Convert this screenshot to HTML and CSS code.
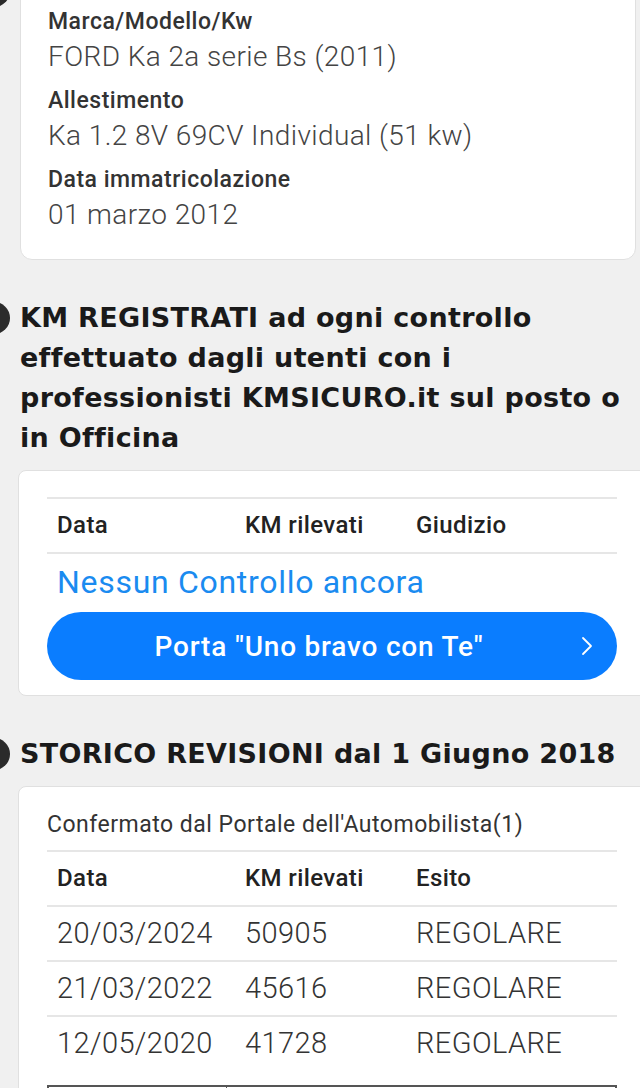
FILE: index.html
```html
<!DOCTYPE html>
<html lang="it">

<head>
    <meta charset="UTF-8">
    <meta name="viewport" content="width=device-width, initial-scale=1.0">
    <link rel="stylesheet" href="styles.css">

    <title>Scheda veicolo</title>
</head>

<body>
    <div class="page">
        <span class="dot-top"></span>

        <div class="card card-info">
            <div class="field">
                <div class="label">Marca/Modello/Kw</div>
                <div class="value">FORD Ka 2a serie Bs (2011)</div>
            </div>
            <div class="field">
                <div class="label">Allestimento</div>
                <div class="value">Ka 1.2 8V 69CV Individual (51 kw)</div>
            </div>
            <div class="field">
                <div class="label">Data immatricolazione</div>
                <div class="value">01 marzo 2012</div>
            </div>
        </div>

        <h2 class="section-title">KM REGISTRATI ad ogni controllo effettuato dagli utenti con i professionisti KMSICURO.it sul posto o in Officina</h2>

        <div class="card card-table card-km">
            <table class="grid">
                <tr>
                    <th>Data</th>
                    <th>KM rilevati</th>
                    <th>Giudizio</th>
                </tr>
            </table>
            <p class="empty">Nessun Controllo ancora</p>
            <a class="cta" href="#">
                <span>Porta "Uno bravo con Te"</span>
                <svg width="12" height="20" viewBox="0 0 12 20"><polyline points="2,2 10,10 2,18" fill="none" stroke="#fff" stroke-width="1.8" stroke-linecap="round" stroke-linejoin="round"/></svg>
            </a>
        </div>

        <h2 class="section-title">STORICO REVISIONI dal 1 Giugno 2018</h2>

        <div class="card card-table card-rev">
            <p class="caption">Confermato dal Portale dell'Automobilista(1)</p>
            <table class="grid">
                <tr>
                    <th>Data</th>
                    <th>KM rilevati</th>
                    <th>Esito</th>
                </tr>
                <tr>
                    <td>20/03/2024</td>
                    <td>50905</td>
                    <td>REGOLARE</td>
                </tr>
                <tr>
                    <td>21/03/2022</td>
                    <td>45616</td>
                    <td>REGOLARE</td>
                </tr>
                <tr>
                    <td>12/05/2020</td>
                    <td>41728</td>
                    <td>REGOLARE</td>
                </tr>
            </table>
            <table class="legend">
                <tr>
                    <td></td>
                    <td></td>
                </tr>
            </table>
        </div>
    </div>
</body>

</html>
```

FILE: styles.css
```css
body {
    font-family: Roboto, "Liberation Sans", sans-serif;
    background-color: #f0f0f0;
    margin: 0;
    overflow: hidden;
    color: #333;
}

.page {
    position: relative;
}

.dot-top {
    position: absolute;
    left: -22px;
    top: -13px;
    width: 32px;
    height: 32px;
    border-radius: 50%;
    background-color: #2b2b2b;
}

.card {
    background-color: #fff;
    border: 1px solid #e0e0e0;
    border-radius: 12px;
}

/* dati veicolo */
.card-info {
    margin: -12px 4px 0 20px;
    padding: 19px 20px 26px 27px;
}

.field {
    margin-bottom: 12px;
}

.field:last-child {
    margin-bottom: 0;
}

.label {
    font-size: 23px;
    line-height: 28px;
    font-weight: 500;
    letter-spacing: 0.5px;
    color: #333;
}

.value {
    margin-top: 3px;
    font-size: 28px;
    line-height: 36px;
    font-weight: 300;
    letter-spacing: 0.4px;
    color: #444;
}

.section-title {
    position: relative;
    margin: 38px 10px 12px 20px;
    font-family: "DejaVu Sans", Inter, sans-serif;
    font-size: 27px;
    line-height: 40px;
    font-weight: 700;
    letter-spacing: 0.3px;
    color: #1a1a1a;
}

.section-title::before {
    content: "";
    position: absolute;
    left: -42px;
    top: 4px;
    width: 32px;
    height: 32px;
    border-radius: 50%;
    background-color: #2b2b2b;
}

.card-table {
    margin: 0 -10px 0 18px;
    padding: 26px 32px 15px 28px;
    border-radius: 8px;
}

.card-rev {
    margin-top: 11px;
    padding-top: 25px;
}

.grid {
    width: 570px;
    border-collapse: separate;
    border-spacing: 0;
}

.grid th,
.grid td {
    text-align: left;
    padding: 0 0 0 10px;
    line-height: 53px;
    white-space: nowrap;
}

.grid th {
    font-size: 24px;
    font-weight: 500;
    letter-spacing: 0.4px;
    color: #222;
    border-top: 2px solid #e6e6e6;
    border-bottom: 2px solid #e6e6e6;
}

.grid th:nth-child(1) {
    width: 178px;
}

.grid th:nth-child(2) {
    width: 161px;
}

.grid td {
    font-size: 29px;
    font-weight: 300;
    letter-spacing: 0.4px;
    color: #333;
    border-bottom: 2px solid #e6e6e6;
}

.grid tr:last-child td {
    border-bottom: none;
}

.empty {
    margin: 0;
    padding-left: 10px;
    font-size: 32px;
    line-height: 56px;
    letter-spacing: 0.7px;
    color: #1a8bf0;
}

.cta {
    display: flex;
    align-items: center;
    width: 570px;
    box-sizing: border-box;
    height: 68px;
    margin-top: 2px;
    padding: 0 24px 0 10px;
    border-radius: 34px;
    background-color: #0a7dff;
    color: #fff;
    text-decoration: none;
    font-size: 28px;
    font-weight: 500;
    letter-spacing: 0.8px;
}

.cta span {
    flex: 1;
    text-align: center;
}

.caption {
    margin: 0 0 12px;
    font-size: 23px;
    line-height: 26px;
    letter-spacing: 0.5px;
    color: #333;
}

.legend {
    width: 570px;
    margin-top: 15px;
    border-collapse: collapse;
    border: 2px solid #555;
}

.legend td {
    height: 40px;
    border: 1px solid #555;
}

.legend td:first-child {
    width: 175px;
}
```
